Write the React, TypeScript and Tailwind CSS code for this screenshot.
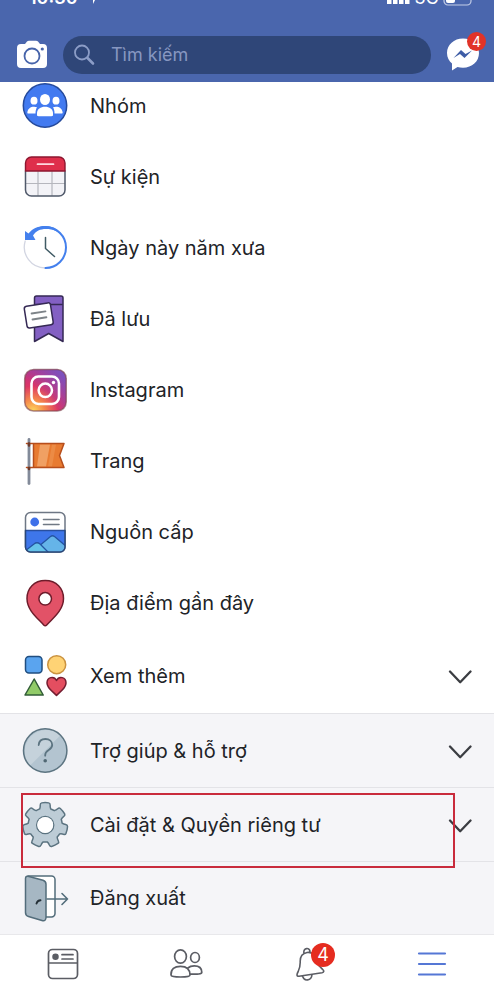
import type { ReactNode } from "react";

function Svg({ children, className = "h-12 w-12" }: { children: ReactNode; className?: string }) {
  return (
    <svg viewBox="0 0 48 48" className={`shrink-0 ${className}`} fill="none" strokeLinecap="round" strokeLinejoin="round" aria-hidden="true">
      {children}
    </svg>
  );
}

const GroupIcon = () => (
  <Svg>
    <circle cx="24" cy="23.5" r="21.7" fill="#427af0" stroke="#254a9c" strokeWidth="1.5" />
    <g fill="#fff">
      <ellipse cx="24" cy="17.5" rx="5" ry="5.5" />
      <path d="M16 33v-2c0-4 3.500-6.300 8-6.300s8 2.300 8 6.300v2c0 .8-.7 1.200-1.500 1.200h-13c-.8 0-1.500-.4-1.500-1.200z" />
      <ellipse cx="13" cy="18.700" rx="3.500" ry="3.900" />
      <ellipse cx="35" cy="18.700" rx="3.500" ry="3.900" />
      <path d="M14.500 31.500H7.500c-1 0-1.300-.5-1.100-1.500.5-3.300 3-5.300 6.600-5.300 1.200 0 2.200.2 3 .6-1 1.700-1.500 3.500-1.500 6.200zM33.500 31.500h7c1 0 1.300-.5 1.100-1.500-.5-3.300-3-5.300-6.600-5.300-1.200 0-2.200.2-3 .6 1 1.700 1.500 3.500 1.500 6.200z" />
    </g>
  </Svg>
);

const CalendarIcon = () => (
  <Svg>
    <rect x="4.500" y="4" width="39.500" height="39" rx="6" fill="#f3f3f7" />
    <path d="M4.500 18v-8a6 6 0 0 1 6-6H38a6 6 0 0 1 6 6v8z" fill="#df2f4b" />
    <path d="M17 18.500v24M31 18.500v24M5 30.500h38.500" stroke="#b5b6bd" strokeWidth="1.200" />
    <path d="M4.500 18v19a6 6 0 0 0 6 6H38a6 6 0 0 0 6-6V18" stroke="#50596a" strokeWidth="1.500" />
    <path d="M4.500 18v-8a6 6 0 0 1 6-6H38a6 6 0 0 1 6 6v8z" stroke="#8d1730" strokeWidth="1.400" />
    <path d="M16.500 11.200h16" stroke="#ffd9df" strokeWidth="1.700" />
  </Svg>
);

const HistoryIcon = () => (
  <Svg>
    <path d="M4.200 17A21 21 0 0 0 24.500 44" stroke="#d3d6e2" strokeWidth="1.300" />
    <path d="M10 10C14 5 19 3 24.500 3a20.500 20.500 0 0 1 0 41" stroke="#4480ed" strokeWidth="2" />
    <path d="M7.500 9.500C12 4 18 1.800 25 2c8 .2 14 5 17 11C38 7.500 32 5 25 5c-6 0-10 2-13 6.500l2.500 4.500H4V7z" fill="#4480ed" />
    <path d="M24.500 13.500v11l9 8" stroke="#405b65" strokeWidth="1.500" />
  </Svg>
);

const SavedIcon = () => (
  <Svg>
    <path d="M13.500 3a2 2 0 0 1 2-2H40a2 2 0 0 1 2 2v43.500L27.700 38.500 13.500 46.500z" fill="#8360c3" stroke="#352954" strokeWidth="1.500" />
    <path d="M14.500 9.500H41" stroke="#352954" strokeWidth="1.500" />
    <g transform="rotate(-9 17.500 20.500)">
      <rect x="4.500" y="9.500" width="26.500" height="22" rx="2.500" fill="#fff" stroke="#352954" strokeWidth="1.500" />
      <path d="M11 17.500h14M11 23.500h14" stroke="#7d8388" strokeWidth="1.900" />
    </g>
  </Svg>
);

const InstagramIcon = () => (
  <Svg>
    <defs>
      <radialGradient id="igWarm" cx=".2" cy="1" r="1.100">
        <stop offset="0" stopColor="#ffd85d" />
        <stop offset=".25" stopColor="#f58a4b" />
        <stop offset=".55" stopColor="#dd3565" />
        <stop offset="1" stopColor="#b43092" />
      </radialGradient>
      <linearGradient id="igCool" x1=".4" y1=".6" x2="1" y2="0">
        <stop offset="0" stopColor="#7551c2" stopOpacity="0" />
        <stop offset="1" stopColor="#7158c6" />
      </linearGradient>
    </defs>
    <rect x="3.700" y="3.500" width="41.500" height="41.500" rx="9" fill="url(#igWarm)" />
    <rect x="3.700" y="3.500" width="41.500" height="41.500" rx="9" fill="url(#igCool)" stroke="#7e4650" strokeOpacity=".65" strokeWidth="1.500" />
    <rect x="10.500" y="10.500" width="27.500" height="27.500" rx="7" stroke="#fff" strokeWidth="2.600" />
    <circle cx="24.300" cy="24.300" r="6.700" stroke="#fff" strokeWidth="2.500" />
    <circle cx="32.500" cy="16.500" r="1.700" fill="#fff" />
  </Svg>
);

const FlagIcon = () => (
  <Svg>
    <path d="M8 2.500v44" stroke="#828a99" strokeWidth="2.800" />
    <path d="M13 6.500h30L38.500 18.500l4.500 12H13z" fill="#e87b31" />
    <path d="M19 7.500h10l-4 22h-9z" fill="#f0a063" />
    <path d="M31 7.500h4l-4 22h-4z" fill="#ec8b45" />
    <path d="M5.500 6.500H43L38.500 18.500l4.500 12H5.500M12.500 7v23" stroke="#b64e1c" strokeWidth="1.500" />
    <path d="M8 6.500v2M8 31v1" stroke="#6b3a2c" strokeWidth="2.600" />
  </Svg>
);

const FeedIcon = () => (
  <Svg>
    <defs>
      <clipPath id="feedCard"><rect x="4.500" y="4.500" width="39.500" height="39.500" rx="5" /></clipPath>
    </defs>
    <rect x="4.500" y="4.500" width="39.500" height="39.500" rx="5" fill="#fff" stroke="#6e7785" strokeWidth="1.500" />
    <g clipPath="url(#feedCard)">
      <path d="M4 22.500h41V45H4z" fill="#3e76ea" />
      <path d="M17 39l12.500-10.500q2-1.500 4 0L46 39v8H17z" fill="#65b4e8" stroke="#2454a2" strokeWidth="1.300" />
      <path d="M4 43l9-7q3-2.500 6 0l9 9H4z" fill="#65c2e8" stroke="#2454a2" strokeWidth="1.300" />
      <path d="M4 22.500h41" stroke="#294f9e" strokeWidth="1.400" />
    </g>
    <path d="M4.500 22.500V39a5 5 0 0 0 5 5H39a5 5 0 0 0 5-5V22.500" stroke="#294779" strokeWidth="1.500" />
    <circle cx="13.700" cy="14" r="4.400" fill="#3e70e9" />
    <path d="M22.500 11.500H38M22.500 16.500H38" stroke="#707984" strokeWidth="1.600" />
  </Svg>
);

const PinIcon = () => (
  <Svg>
    <path fillRule="evenodd" d="M24.200 1.500C13 1.500 6 9.500 6 19.500c0 12 11 20 16.700 26.500q1.500 1.700 3 0C31.500 39.500 42.500 31.500 42.500 19.500c0-10-7-18-18.300-18zm0 12a6.300 6.300 0 1 1 0 12.600 6.300 6.300 0 0 1 0-12.600z" fill="#e25267" stroke="#6e1c2b" strokeWidth="1.500" />
  </Svg>
);

const ShapesIcon = () => (
  <Svg>
    <rect x="4.500" y="4.500" width="16.500" height="16.500" rx="3.500" fill="#5aa4ef" stroke="#204e80" strokeWidth="1.500" />
    <circle cx="35.700" cy="12.700" r="9" fill="#ffd375" stroke="#cb9340" strokeWidth="1.500" />
    <path d="M13.200 27l9 16H4z" fill="#91cb68" stroke="#315c37" strokeWidth="1.500" />
    <path d="M35.500 43.500C32 39.500 26 36.500 26 31c0-6 7-7.500 9.500-2.500 2.500-5 9.500-3.500 9.500 2.500C45 36.500 39 39.500 35.500 43.500z" fill="#e44e60" stroke="#741e31" strokeWidth="1.500" />
  </Svg>
);

const HelpIcon = () => (
  <Svg>
    <circle cx="24.200" cy="23.500" r="21.700" fill="#b3c4d0" />
    <path d="M8.900 38.800A21.700 21.700 0 0 1 39.500 8.200z" fill="#c5d2db" />
    <circle cx="24.200" cy="23.500" r="21.700" stroke="#5c7481" strokeWidth="1.500" />
    <path d="M17.700 18c.3-4 3-6 6.700-6 4 0 6.800 2.300 6.800 6 0 5.500-7 4.500-7 10v.7" stroke="#5c7481" strokeWidth="1.800" />
    <circle cx="24.200" cy="33.700" r="1.800" fill="#506773" />
  </Svg>
);

const polar = (radius: number, degrees: number) => {
  const angle = ((degrees - 90) * Math.PI) / 180;
  return `${(24.2 + radius * Math.cos(angle)).toFixed(2)} ${(24 + radius * Math.sin(angle)).toFixed(2)}`;
};

// Seven rounded teeth, each joined to the next by an arc of the hub.
const gearOutline =
  Array.from({ length: 7 }, (_, tooth) => {
    const a = (tooth * 360) / 7;
    return `${tooth === 0 ? "M" : "A17 17 0 0 1 "}${polar(17, a - 19)}Q${polar(18.5, a - 15)} ${polar(20.5, a - 14)}Q${polar(22.4, a - 13)} ${polar(22.4, a - 9)}A22.4 22.4 0 0 1 ${polar(22.4, a + 9)}Q${polar(22.4, a + 13)} ${polar(20.5, a + 14)}Q${polar(18.5, a + 15)} ${polar(17, a + 19)}`;
  }).join("") + "Z";

const GearIcon = () => (
  <Svg>
    <path fillRule="evenodd" d={`${gearOutline}M24.200 15.500a8.500 8.500 0 1 0 0 17 8.500 8.500 0 0 0 0-17z`} fill="#bdccd6" stroke="#5b7380" strokeWidth="1.500" />
    <circle cx="24.200" cy="24" r="8" fill="#fff" />
  </Svg>
);

const DoorIcon = () => (
  <Svg>
    <path d="M7 2h23.500A3.500 3.500 0 0 1 34 5.500v34a3.500 3.500 0 0 1-3.500 3.500H25" fill="#fff" stroke="#536d7b" strokeWidth="1.500" />
    <path d="M4.500 4.500q0-3 3.500-2l14 3.700q3 1 3 4v33q0 4.500-4 3.300L7.500 42.500q-3-.8-3-4z" fill="#a6b7c3" stroke="#536d7b" strokeWidth="1.500" />
    <path d="M15.500 29.500q1-3 4-3.200" stroke="#253138" strokeWidth="1.900" />
    <path d="M26 25h20.500M41 19.500l5.500 5.500-5.500 5.500" stroke="#536d7b" strokeWidth="1.600" />
  </Svg>
);

const Chevron = () => (
  <svg viewBox="0 0 24 16" className="h-4 w-6 shrink-0" fill="none" stroke="#3b3d42" strokeWidth="2.300" strokeLinecap="round" strokeLinejoin="round" aria-hidden="true">
    <path d="M2 3.500L12.200 14.200 22.500 3.500" />
  </svg>
);

function MenuRow({ icon, label, expandable = false, highlighted = false, className }: {
  icon: ReactNode;
  label: string;
  expandable?: boolean;
  highlighted?: boolean;
  className: string;
}) {
  return (
    <li className={`relative ${className}`}>
      <button type="button" className="flex h-full w-full items-center pr-[22px] pl-[21px] text-left text-xl">
        {icon}
        <span className="ml-[21px] flex-1">{label}</span>
        {expandable && <Chevron />}
      </button>
      {highlighted && <div className="pointer-events-none absolute top-[5px] right-[39px] -bottom-[7px] left-[21px] z-10 border-2 border-[#c92b3c]" />}
    </li>
  );
}

const shortcuts = [
  { label: "Nhóm", icon: <GroupIcon /> },
  { label: "Sự kiện", icon: <CalendarIcon /> },
  { label: "Ngày này năm xưa", icon: <HistoryIcon /> },
  { label: "Đã lưu", icon: <SavedIcon /> },
  { label: "Instagram", icon: <InstagramIcon /> },
  { label: "Trang", icon: <FlagIcon /> },
  { label: "Nguồn cấp", icon: <FeedIcon /> },
  { label: "Địa điểm gần đây", icon: <PinIcon /> },
];

function Header() {
  return (
    <header className="relative z-10 bg-[#4a66ad] text-white">
      <div className="flex h-7 items-start justify-between overflow-hidden pr-[21px] pl-[29px]">
        <div className="-mt-3.5 flex items-center gap-2 text-lg leading-6 font-semibold">
          <span>10:30</span>
          <svg viewBox="0 0 14 14" className="h-3.5 w-3.5" fill="#fff" aria-hidden="true"><path d="M13 1L7 13V7H1z" /></svg>
        </div>
        <div className="-mt-3.5 flex items-center gap-1 text-lg leading-6">
          <svg viewBox="0 0 24 16" className="h-4 w-6" fill="#fff" aria-hidden="true"><path d="M1 10h4.500v4H1zM7 7h4.500v7H7zM13 4h4.500v10H13zM19 1h4.500v13H19z" /></svg>
          <span>3G</span>
          <svg viewBox="0 0 30 16" className="h-4 w-[30px]" fill="none" aria-hidden="true">
            <rect x="1" y="1" width="27" height="14" rx="4" stroke="#c3cde7" strokeWidth="1.200" />
            <rect x="3" y="3" width="9" height="10" rx="2" fill="#fff" />
          </svg>
        </div>
      </div>
      <div className="flex h-[54px] items-center pr-3.5 pl-4">
        <button type="button" aria-label="Camera" className="shrink-0">
          <svg viewBox="0 0 32 30" className="h-[30px] w-8" aria-hidden="true">
            <path d="M5 4h4l2-2.500q.7-.8 2-.8h7q1.300 0 2 .8L24 4h3q4 0 4 4v16q0 4-4 4H5q-4 0-4-4V8q0-4 4-4z" fill="#fff" />
            <circle cx="16" cy="16" r="7.500" fill="none" stroke="#4764aa" strokeWidth="1.800" />
            <circle cx="26.300" cy="9" r="1.600" fill="#4764aa" />
          </svg>
        </button>
        <label className="ml-[15px] flex h-[38px] min-w-0 flex-1 items-center rounded-full bg-[#2f4678] pl-2.5">
          <svg viewBox="0 0 22 22" className="h-[22px] w-[22px] shrink-0" fill="none" stroke="#8c9dc7" strokeLinecap="round" aria-hidden="true">
            <circle cx="9" cy="8.500" r="7" strokeWidth="1.800" />
            <path d="M14.500 14l5.500 5.500" strokeWidth="2.600" />
          </svg>
          <input type="text" aria-label="Tìm kiếm" placeholder="Tìm kiếm" className="ml-4 min-w-0 flex-1 bg-transparent text-lg outline-none placeholder:text-[#8797c1]" />
        </label>
        <button type="button" aria-label="Messenger" className="relative ml-[15px] h-[34px] w-[34px] shrink-0">
          <svg viewBox="0 0 34 34" className="h-full w-full" aria-hidden="true">
            <path d="M17 .5C8 .5 1 6.700 1 15c0 4.500 2 8 5 10.600V32.500l5.500-3.500q2.500.7 5.500.7c9 0 16-6.200 16-14.700S26 .5 17 .5z" fill="#fff" />
            <path d="M7.500 20L15 12l4.500 4 6.500-3.500L18.500 20l-4.500-4z" fill="#3e5da6" />
          </svg>
          <span className="absolute -top-1.5 -right-1.5 flex h-[19px] w-[19px] items-center justify-center rounded-full bg-[#e13328] text-sm leading-none text-white">4</span>
        </button>
      </div>
    </header>
  );
}

function BottomNav() {
  return (
    <nav className="grid h-[66px] grid-cols-4 border-t border-[#e8e8eb] bg-white pb-2 pl-px">
      <a href="#feed" aria-label="Bảng tin" className="flex items-center justify-center">
        <svg viewBox="0 0 32 32" className="h-8 w-8" fill="none" stroke="#5b5d64" strokeWidth="1.700" strokeLinecap="round" aria-hidden="true">
          <rect x="1.500" y="1.500" width="29" height="29" rx="4" />
          <path d="M2 15h28M15 6.700h11M15 11h11" />
          <circle cx="8.500" cy="8.700" r="2.400" fill="#5b5d64" />
        </svg>
      </a>
      <a href="#friends" aria-label="Bạn bè" className="flex items-center justify-center">
        <svg viewBox="0 0 34 32" className="h-8 w-[34px]" fill="none" stroke="#5b5d64" strokeWidth="1.700" strokeLinejoin="round" aria-hidden="true">
          <ellipse cx="11.500" cy="8.500" rx="5.900" ry="6.700" />
          <ellipse cx="26" cy="9.500" rx="4.400" ry="5" />
          <path d="M2 27c-.3-6 3.500-8.700 9.500-8.700S21 21 21 27q0 2-9.500 2T2 27zM18.800 20c1.700-1.500 4-2.200 6.500-2.200 5 0 7.500 2.500 7.500 6.500 0 1.700-4 2.200-11.800 1.700" />
        </svg>
      </a>
      <a href="#notifications" aria-label="Thông báo, 4" className="flex items-center justify-center">
        <span className="relative">
          <svg viewBox="0 0 34 34" className="h-[34px] w-[34px]" fill="none" stroke="#5b5d64" strokeWidth="1.600" strokeLinejoin="round" aria-hidden="true">
            <path d="M15 5.500C10 6.500 8 10.500 8.200 15c.1 4.500-.3 6-2 9.500C4.500 27.500 4.500 29.500 7 29.200L30 25.700c2.200-.4 2.200-2 .7-3.200-4.700-3.500-5-5.500-6.700-10C22.500 7 19.500 4.700 15 5.500zM12 6.500C10.500.5 18.500-.2 18 5.300M10.500 28.800c1.500 6.200 9 5.200 9.500-1.300" />
          </svg>
          <span className="absolute -top-1 -right-[9px] flex h-6 w-6 items-center justify-center rounded-full bg-[#e52c20] text-lg leading-none text-white">4</span>
        </span>
      </a>
      <a href="#menu" aria-label="Menu" className="flex items-center justify-center">
        <svg viewBox="0 0 30 26" className="h-[26px] w-[30px]" fill="none" stroke="#5577d5" strokeWidth="2.200" strokeLinecap="round" aria-hidden="true">
          <path d="M2 2.500h26M2 13h26M2 23.500h26" />
        </svg>
      </a>
    </nav>
  );
}

export default function App() {
  return (
    <div className="bg-white font-['Inter','Noto_Sans',sans-serif] text-[#212327]">
      <Header />
      <main className="overflow-hidden">
        <ul className="-mt-3">
          {shortcuts.map((item) => (
            <MenuRow key={item.label} {...item} className="h-[71px]" />
          ))}
          <MenuRow icon={<ShapesIcon />} label="Xem thêm" expandable className="h-[75px]" />
        </ul>
        <ul className="bg-[#f5f5f8]">
          <MenuRow icon={<HelpIcon />} label="Trợ giúp & hỗ trợ" expandable className="h-[74px] border-t border-[#e3e3e7]" />
          <MenuRow icon={<GearIcon />} label="Cài đặt & Quyền riêng tư" expandable highlighted className="h-[74px] border-t border-[#e3e3e7]" />
          <MenuRow icon={<DoorIcon />} label="Đăng xuất" className="h-[73px] border-t border-[#e3e3e7]" />
        </ul>
      </main>
      <BottomNav />
    </div>
  );
}
